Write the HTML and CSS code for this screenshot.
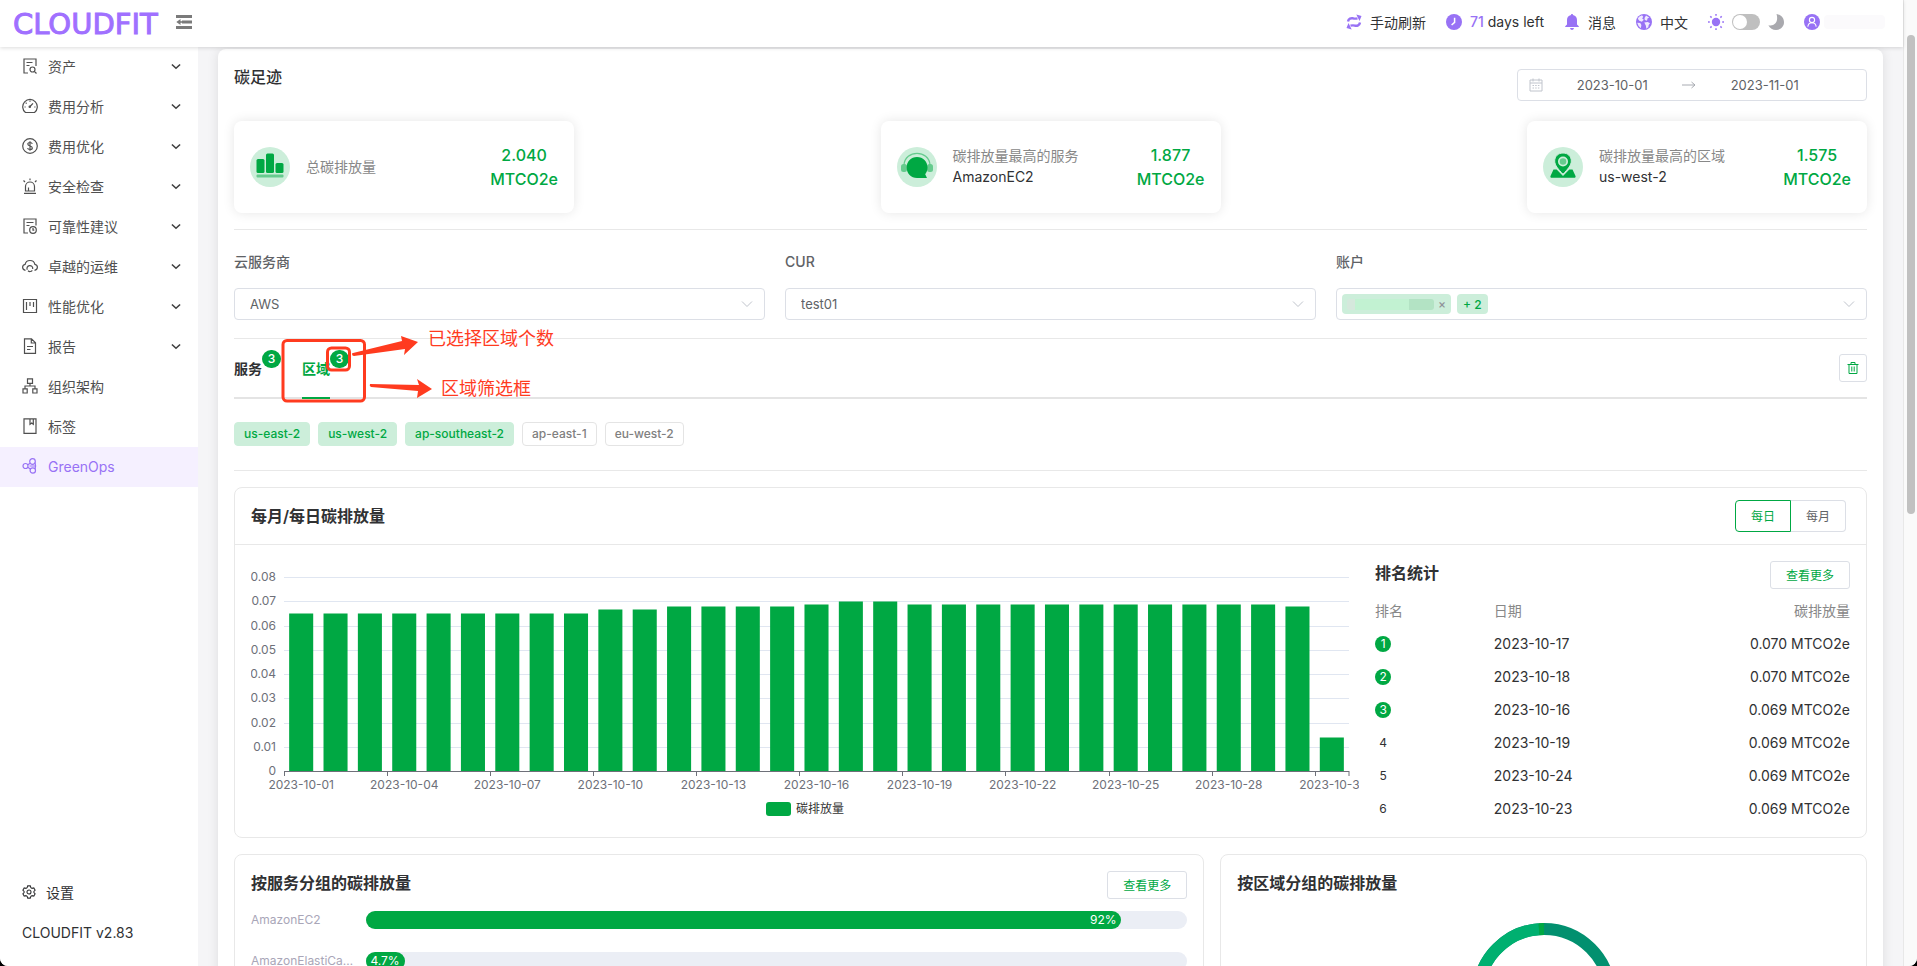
FILE: index.html
```html
<!DOCTYPE html>
<html lang="zh-CN">
<head>
  <meta charset="UTF-8">
  <title>CLOUDFIT - GreenOps</title>
  <link rel="stylesheet" href="styles.css">
</head>
<body>
  <div class="app">
    <div class="window">
      <header class="header">
        <a class="logo" href="#">CLOUDFIT</a>
        <button class="fold" type="button" aria-label="收起菜单">
          <svg width="16" height="14" viewBox="0 0 16 14" fill="#7a7a7a"><path d="M0 0h16v3H0zM6 5.500h10v3H6zM0 11h16v3H0zM4.500 4v6L.3 7z"/><path d="M3 6.200h3v1.600H3z"/></svg>
        </button>
        <nav class="tools">
          <a class="tool" href="#">
            <svg width="16" height="16" viewBox="0 0 16 16" fill="none" stroke="#9872f5" stroke-width="2.400"><path d="M2 7.500C2.500 4.500 5 3.900 7 4.300c1.500.5 2.500.5 4.500 0M14 8.500c-.5 3-3 3.600-5 3.200-1.500-.5-2.500-.5-4.500 0"/><path d="M10.300.5L15.500 2l-2 5zM5.700 15.500L.5 14l2-5z" fill="#9872f5" stroke="none"/></svg>
            手动刷新
          </a>
          <a class="tool" href="#">
            <svg width="16" height="16" viewBox="0 0 16 16"><circle cx="8" cy="8" r="8" fill="#9872f5"/><path d="M8.600 3.800v4.600L5.600 11" fill="none" stroke="#fff" stroke-width="1.500"/></svg>
            <span><b class="days">71</b> days left</span>
          </a>
          <a class="tool" href="#">
            <svg width="16" height="16" viewBox="0 0 16 16" fill="#9872f5"><path d="M8 0c.7 0 1 .4 1 1 2.700.5 4 2.400 4 5v4.500l1.800 1.700v.8H1.200v-.8L3 10.500V6c0-2.600 1.300-4.500 4-5 0-.6.3-1 1-1zM6 14h4c-.3 1.300-1 2-2 2s-1.700-.7-2-2z"/></svg>
            消息
          </a>
          <a class="tool" href="#">
            <svg width="16" height="16" viewBox="0 0 16 16"><circle cx="8" cy="8" r="8" fill="#9872f5"/><path d="M3 2.800l3-1.600 1.200 1.500-1 1.800 1.600 1.300-2 1.900-2.500-1-1.500-2zM10 1.400l3.200 2-1.700 1-.5 2.300-2.200-.6-.3-2.200zM1.200 8.800l3 .3 1.200 2-.6 3.200-2.200-2.200zM8.300 8.600l3.400-.6 2.300 1.300-1.300 1.600-.4 2.400-2 1.500-.4-3z" fill="#fff" opacity=".85"/></svg>
            中文
          </a>
          <label class="theme">
            <svg width="16" height="16" viewBox="0 0 16 16"><circle cx="8" cy="8" r="4.200" fill="#9872f5"/><path d="M8 0v1.800M8 14.200V16M0 8h1.800M14.200 8H16M2.300 2.300l1.300 1.300M12.400 12.400l1.300 1.300M2.300 13.700l1.300-1.300M12.400 3.600l1.300-1.300" stroke="#9872f5" stroke-width="1.500"/></svg>
            <input class="switch" type="checkbox" aria-label="深色模式">
            <svg width="16" height="16" viewBox="0 0 16 16"><path d="M8.500 0C13 .8 16 4 16 8.300 16 12.800 12.500 16 8 16c-3.300 0-6.200-1.800-7.600-4.800 5.500 1.600 10.600-3 8.100-11.200z" fill="#a9a9ae"/></svg>
          </label>
          <a class="user" href="#" aria-label="用户">
            <svg width="16" height="16" viewBox="0 0 16 16"><circle cx="8" cy="8" r="8" fill="#9872f5"/><g fill="none" stroke="#fff" stroke-width="1.100"><circle cx="8" cy="6" r="2.600"/><path d="M3.800 12.600C4.200 10 6 8.700 8 8.700s3.800 1.300 4.200 3.900"/></g></svg>
            <span class="user-name"></span>
          </a>
        </nav>
      </header>

      <div class="layout">
        <aside class="sidebar">
          <ul class="menu">
            <li><a class="menu-item" href="#">
              <svg class="icon" viewBox="0 0 16 16"><path d="M6 15H2V1h12v7M4.500 4.500h6M4.500 7.500h3"/><circle cx="10.500" cy="11.500" r="2.500"/><path d="M12.300 13.300L14.500 15.500"/></svg>
              资产<svg class="chevron" viewBox="0 0 8 6"><path d="M.5 1.300L4 4.500l3.500-3.200"/></svg></a></li>
            <li><a class="menu-item" href="#">
              <svg class="icon" viewBox="0 0 16 16"><path d="M3.500 14.500A7.300 7.300 0 1 1 12.500 14.500zM8 8.500l3-3.200M8 2.500v1.200M3.700 4.700l.9.900M2.500 9h1.200M12.300 9h1.200"/><circle cx="7.800" cy="8.700" r=".7"/></svg>
              费用分析<svg class="chevron" viewBox="0 0 8 6"><path d="M.5 1.300L4 4.500l3.500-3.200"/></svg></a></li>
            <li><a class="menu-item" href="#">
              <svg class="icon" viewBox="0 0 16 16"><circle cx="8" cy="8" r="7.300"/><path d="M10.300 5.800C10 4.800 9.200 4.500 8 4.500c-1.300 0-2.200.6-2.200 1.600 0 2.500 4.500 1.300 4.500 3.800 0 1-1 1.600-2.300 1.600s-2.200-.5-2.400-1.500M8 3.200v9.600"/></svg>
              费用优化<svg class="chevron" viewBox="0 0 8 6"><path d="M.5 1.300L4 4.500l3.500-3.200"/></svg></a></li>
            <li><a class="menu-item" href="#">
              <svg class="icon" viewBox="0 0 16 16"><path d="M3.500 13V8.500a4.500 4.500 0 0 1 9 0V13zM2 15.300h12M6.500 12.500V9.500M8 .5v1.800M1.500 2.500L3 4M14.500 2.500L13 4"/></svg>
              安全检查<svg class="chevron" viewBox="0 0 8 6"><path d="M.5 1.300L4 4.500l3.500-3.200"/></svg></a></li>
            <li><a class="menu-item" href="#">
              <svg class="icon" viewBox="0 0 16 16"><path d="M6 15H2V1h12v6.500M4.500 4.500h7M4.500 7.500h3"/><circle cx="11" cy="12" r="3.300"/><path d="M11 10v2.200h1.300"/></svg>
              可靠性建议<svg class="chevron" viewBox="0 0 8 6"><path d="M.5 1.300L4 4.500l3.500-3.200"/></svg></a></li>
            <li><a class="menu-item" href="#">
              <svg class="icon" viewBox="0 0 16 16"><path d="M3.500 12.300C1.700 12 .6 10.800.6 9.300c0-1.600 1-2.600 2.500-2.900C3.600 4 5.500 2.500 8 2.500S12.400 4 12.900 6.400c1.500.3 2.500 1.300 2.500 2.900 0 1.500-1.100 2.700-2.900 3"/><path d="M5.300 11.800a2.900 2.900 0 1 1 5.400-.8M10.300 12.300A2.900 2.900 0 0 1 6 12.800"/></svg>
              卓越的运维<svg class="chevron" viewBox="0 0 8 6"><path d="M.5 1.300L4 4.500l3.500-3.200"/></svg></a></li>
            <li><a class="menu-item" href="#">
              <svg class="icon" viewBox="0 0 16 16"><path d="M1.500 1.500h13v13h-13zM4.500 4v8M8 4v4M11.500 4v5"/></svg>
              性能优化<svg class="chevron" viewBox="0 0 8 6"><path d="M.5 1.300L4 4.500l3.500-3.200"/></svg></a></li>
            <li><a class="menu-item" href="#">
              <svg class="icon" viewBox="0 0 16 16"><path d="M2.500.8h7l4 4v10.500h-11zM9.300 1v4h4M5 8.500h6M5 11.500h3.500"/></svg>
              报告<svg class="chevron" viewBox="0 0 8 6"><path d="M.5 1.300L4 4.500l3.500-3.200"/></svg></a></li>
            <li><a class="menu-item" href="#">
              <svg class="icon" viewBox="0 0 16 16"><path d="M5.500.8h5v4.500h-5zM1 10.800h4.200v4.200H1zM10.800 10.800H15v4.200h-4.200zM8 5.300V8M3 10.800V8h10v2.800"/></svg>
              组织架构</a></li>
            <li><a class="menu-item" href="#">
              <svg class="icon" viewBox="0 0 16 16"><path d="M2 .8h12v14.500H2zM8 .8v5.500l1.700-1.300 1.600 1.300V.8"/></svg>
              标签</a></li>
            <li><a class="menu-item active" href="#">
              <svg class="icon" viewBox="0 0 16 16"><circle cx="3.500" cy="8" r="2.500"/><circle cx="10.500" cy="3.500" r="2.800"/><circle cx="10.800" cy="12.500" r="2.700"/><path d="M5.700 6.800L8.300 5.200M5.700 9.200l2.700 1.900M7.500 8h5.500M13 4.500c.7 2 .7 4.500 0 6.500"/></svg>
              GreenOps</a></li>
          </ul>
          <div class="sidebar-foot">
            <a class="settings" href="#">
              <svg class="gear" viewBox="0 0 16 16"><path d="M6.500 1h3l.6 2 1.400.8 2-.5 1.500 2.600L13.600 7.300v1.400l1.400 1.400-1.500 2.600-2-.5-1.400.8-.6 2h-3l-.6-2-1.400-.8-2 .5L1 10.100l1.400-1.400V7.300L1 5.900l1.500-2.600 2 .5L5.900 3z"/><circle cx="8" cy="8" r="2.300"/></svg>
              设置
            </a>
            <p class="version">CLOUDFIT v2.83</p>
          </div>
        </aside>

        <main class="main">
          <div class="page">
            <div class="page-head">
              <h1>碳足迹</h1>
              <div class="date-range">
                <svg width="14" height="14" viewBox="0 0 14 14" fill="none" stroke="#c0c4cc"><path d="M1 2h12v11H1zM1 5h12M4 .5v3M10 .5v3"/><path d="M3.500 7.500h7M3.500 10h7" stroke-dasharray="1.500 1.200"/></svg>
                <input type="text" aria-label="开始日期" value="2023-10-01">
                <svg width="14" height="8" viewBox="0 0 14 8" fill="none" stroke="#a8abb2"><path d="M0 4h13M9.500 1L13 4 9.500 7"/></svg>
                <input type="text" aria-label="结束日期" value="2023-11-01">
              </div>
            </div>

            <div class="stats">
              <div class="stat">
                <svg width="40" height="40" viewBox="0 0 40 40"><circle cx="20" cy="20" r="20" fill="#cceeda"/><g fill="#00a843"><rect x="6.500" y="12" width="8" height="14" rx="1.500"/><rect x="16" y="6.500" width="8" height="19.500" rx="1.500"/><rect x="25.500" y="16" width="8" height="10" rx="1.500"/></g><rect x="6.500" y="27.500" width="27" height="3" rx="1" fill="#66cb8e"/></svg>
                <div class="stat-label"><span>总碳排放量</span></div>
                <div class="stat-value">2.040<br>MTCO2e</div>
              </div>
              <div class="stat">
                <svg width="40" height="40" viewBox="0 0 40 40"><circle cx="20" cy="20" r="20" fill="#cceeda"/><path d="M7 18C8 2.500 32 2.500 33 18" fill="none" stroke="#66cb8e" stroke-width="1.300"/><rect x="4" y="17" width="6" height="8" rx="2.500" fill="#66cb8e"/><rect x="30" y="17" width="6" height="8" rx="2.500" fill="#66cb8e"/><path d="M20 10c6 0 10.500 4.500 10.500 10.500 0 2.700-.9 5-2.300 6.800L30 31H20C14 31 9.700 26.500 9.700 20.500S14 10 20 10z" fill="#00a843"/></svg>
                <div class="stat-label"><span>碳排放量最高的服务</span>AmazonEC2</div>
                <div class="stat-value">1.877<br>MTCO2e</div>
              </div>
              <div class="stat">
                <svg width="40" height="40" viewBox="0 0 40 40"><circle cx="20" cy="20" r="20" fill="#cceeda"/><path d="M10.500 22.500h3.200L20 29l6.300-6.500h3.200L32.500 29c.4 1-.1 1.800-1.200 1.800H8.700c-1.100 0-1.600-.8-1.200-1.800z" fill="#00a843"/><path d="M20 6c-5 0-8.300 3.500-8.300 8 0 4.300 3.600 8.300 8.300 13.200 4.700-4.900 8.300-8.900 8.300-13.200 0-4.500-3.300-8-8.300-8z" fill="#00a843" stroke="#cceeda" stroke-width="1"/><circle cx="20" cy="14.500" r="5" fill="#cceeda"/><circle cx="20" cy="14.500" r="3.300" fill="#66cb8e"/></svg>
                <div class="stat-label"><span>碳排放量最高的区域</span>us-west-2</div>
                <div class="stat-value">1.575<br>MTCO2e</div>
              </div>
            </div>

            <form class="filters">
              <div class="field">
                <label for="provider">云服务商</label>
                <div class="control">
                  <select id="provider"><option>AWS</option></select>
                  <svg class="arrow" viewBox="0 0 12 8"><path d="M1 1.500l5 5 5-5"/></svg>
                </div>
              </div>
              <div class="field">
                <label for="cur">CUR</label>
                <div class="control">
                  <select id="cur"><option>test01</option></select>
                  <svg class="arrow" viewBox="0 0 12 8"><path d="M1 1.500l5 5 5-5"/></svg>
                </div>
              </div>
              <div class="field">
                <label for="account">账户</label>
                <div class="control multi">
                  <span class="chip"><span class="masked"></span><button type="button" aria-label="移除">×</button></span>
                  <span class="chip more">+ 2</span>
                  <input id="account" type="text">
                  <svg class="arrow" viewBox="0 0 12 8"><path d="M1 1.500l5 5 5-5"/></svg>
                </div>
              </div>
            </form>

            <div class="tabbar">
              <div class="tabs" role="tablist">
                <button class="tab" type="button" role="tab">服务<span class="badge">3</span></button>
                <button class="tab current" type="button" role="tab" aria-selected="true">区域<span class="badge">3</span></button>
              </div>
              <button class="clear" type="button" aria-label="清空">
                <svg width="12" height="12" viewBox="0 0 12 12" fill="none" stroke="#00a843"><path d="M.5 2.500h11M4 2.500v-2h4v2M2 2.500v9h8v-9M4.800 4.500v5M7.200 4.500v5"/></svg>
              </button>
              <!-- callouts over the region tab -->
              <svg class="callout" width="340" height="68" viewBox="0 0 340 68">
                <g fill="none" stroke="#ff3b1f" stroke-width="3"><rect x="49" y="1.500" width="81.500" height="60.500" rx="4"/><rect x="93.500" y="9" width="22" height="22" rx="4"/></g>
                <g fill="#ff3b1f"><path d="M118 15q0-1 1-1l49-12-1-5 17 6-14 13 1-6-51 7q-2 0-2-2zM136 45l49 1-2-6 15 10-15 9 1-7-47-4q-2-1-1-3z"/>
                <text x="194" y="6">已选择区域个数</text><text x="207" y="56">区域筛选框</text></g>
              </svg>
            </div>

            <div class="regions">
              <button class="region on" type="button">us-east-2</button>
              <button class="region on" type="button">us-west-2</button>
              <button class="region on" type="button">ap-southeast-2</button>
              <button class="region" type="button">ap-east-1</button>
              <button class="region" type="button">eu-west-2</button>
            </div>

            <section class="panel">
              <div class="panel-head">
                <h2>每月/每日碳排放量</h2>
                <div class="group">
                  <button class="selected" type="button">每日</button><button type="button">每月</button>
                </div>
              </div>
              <div class="panel-body">
                <div class="chart">
                  <svg id="emissions" height="226" role="img" aria-label="碳排放量"></svg>
                  <div class="legend"><i></i>碳排放量</div>
                </div>
                <div class="rank">
                  <div class="rank-head"><h2>排名统计</h2><button class="btn" type="button">查看更多</button></div>
                  <table>
                    <thead><tr><th>排名</th><th>日期</th><th>碳排放量</th></tr></thead>
                    <tbody>
                      <tr><td><span class="no top">1</span></td><td>2023-10-17</td><td>0.070 MTCO2e</td></tr>
                      <tr><td><span class="no top">2</span></td><td>2023-10-18</td><td>0.070 MTCO2e</td></tr>
                      <tr><td><span class="no top">3</span></td><td>2023-10-16</td><td>0.069 MTCO2e</td></tr>
                      <tr><td><span class="no">4</span></td><td>2023-10-19</td><td>0.069 MTCO2e</td></tr>
                      <tr><td><span class="no">5</span></td><td>2023-10-24</td><td>0.069 MTCO2e</td></tr>
                      <tr><td><span class="no">6</span></td><td>2023-10-23</td><td>0.069 MTCO2e</td></tr>
                    </tbody>
                  </table>
                </div>
              </div>
            </section>

            <div class="groups">
              <section class="panel services">
                <div class="rank-head"><h2>按服务分组的碳排放量</h2><button class="btn" type="button">查看更多</button></div>
                <div class="row">
                  <span class="row-name">AmazonEC2</span>
                  <div class="bar"><div class="fill" style="width: 92%">92%</div></div>
                </div>
                <div class="row">
                  <span class="row-name">AmazonElastiCache</span>
                  <div class="bar"><div class="fill" style="width: 4.7%">4.7%</div></div>
                </div>
              </section>
              <section class="panel by-region">
                <h2>按区域分组的碳排放量</h2>
                <svg class="donut" width="144" height="144" viewBox="0 0 144 144" fill="none" stroke-width="12">
                  <circle cx="72" cy="72" r="66" stroke="#02906f"/>
                  <path d="M72 138A66 66 0 0 1 67 6.200" stroke="#00b070"/>
                  <path d="M67 6.200A66 66 0 0 1 72 6" stroke="#00a843"/>
                </svg>
              </section>
            </div>
          </div>
        </main>
      </div>
    </div>
    <div class="scroll-track"><div class="scroll-thumb"></div></div>
  </div>
  <script src="script.js"></script>
</body>
</html>
```
FILE: styles.css
```css
* {
    box-sizing: border-box;
}

html {
    background: #000;
}

body {
    margin: 0;
    font-family: Inter, "Noto Sans CJK SC", sans-serif;
    font-size: 14px;
    color: #303133;
}

h1, h2, p, ul {
    margin: 0;
    padding: 0;
}

h1, h2 {
    font-size: 16px;
    line-height: 16px;
    font-weight: 500;
}

h2 {
    font-weight: 600;
}

a {
    color: inherit;
    text-decoration: none;
}

button, input, select {
    font: inherit;
    color: inherit;
}

button {
    padding: 0;
    background: none;
    border: none;
    cursor: pointer;
}

.app {
    display: flex;
    height: 100vh;
    overflow: hidden;
    background: #f5f5f7;
    border-radius: 0 0 8px 8px;
}

.window {
    flex: 1;
    min-width: 0;
    display: flex;
    flex-direction: column;
}

/* Header */
.header {
    position: relative;
    z-index: 2;
    flex: none;
    display: flex;
    align-items: center;
    height: 47px;
    padding: 0 18px 4px 13px;
    background: #fff;
    box-shadow: 0 1px 4px rgba(0, 0, 0, 0.14);
}

.logo {
    margin: 4px 18px 0 0;
    font-family: "DejaVu Sans", sans-serif;
    font-size: 29px;
    line-height: 32px;
    color: #a070ff;
    -webkit-text-stroke: 1px #a070ff;
}

.fold {
    display: flex;
}

.tools {
    display: flex;
    align-items: center;
    gap: 20px;
    margin-left: auto;
}

.tool, .theme {
    display: flex;
    align-items: center;
    gap: 8px;
}

.days {
    font-weight: 500;
    color: #9872f5;
}

.switch {
    appearance: none;
    width: 28px;
    height: 16px;
    margin: 0;
    padding: 1px;
    background: #bfbfbf;
    border-radius: 8px;
}

.switch::before {
    content: "";
    display: block;
    width: 14px;
    height: 14px;
    background: #fff;
    border-radius: 50%;
}

.user {
    display: flex;
    align-items: center;
    gap: 4px;
}

.user-name {
    width: 61px;
    height: 14px;
    background: #fbfafc;
    border-radius: 4px;
}

/* Sidebar */
.layout {
    flex: 1;
    display: flex;
    min-height: 0;
}

.sidebar {
    flex: none;
    display: flex;
    flex-direction: column;
    width: 198px;
    background: #fff;
    color: #505050;
}

.menu {
    list-style: none;
}

.menu-item {
    display: flex;
    align-items: center;
    gap: 10px;
    height: 40px;
    padding: 0 17px 2px 22px;
}

.menu-item.active {
    background: #f5f0ff;
    color: #9872f5;
}

.icon, .gear {
    width: 16px;
    height: 16px;
    fill: none;
    stroke: currentColor;
    stroke-width: 1.2;
}

.gear {
    width: 14px;
    height: 14px;
}

.chevron {
    width: 10px;
    height: 7px;
    margin-left: auto;
    fill: none;
    stroke: #404040;
    stroke-width: 1.4;
}

.sidebar-foot {
    margin-top: auto;
    padding: 0 22px 13px;
    color: #303133;
}

.settings {
    display: flex;
    align-items: center;
    gap: 10px;
    height: 40px;
    padding-bottom: 2px;
}

.version {
    line-height: 40px;
}

/* Page */
.main {
    flex: 1;
    min-width: 0;
    padding: 2px 20px 0;
    overflow: hidden;
}

.page {
    padding: 20px 16px;
    background: #fff;
    border-radius: 8px;
    box-shadow: 0 0 12px rgba(0, 0, 0, 0.1);
}

.page-head {
    display: flex;
    justify-content: space-between;
    align-items: flex-start;
    margin-bottom: 20px;
}

.date-range {
    display: flex;
    align-items: center;
    gap: 8px;
    width: 350px;
    height: 32px;
    padding: 0 40px 0 11px;
    border: 1px solid #dcdfe6;
    border-radius: 4px;
    font-size: 13px;
    color: #606266;
}

.date-range svg {
    flex: none;
}

.date-range input {
    flex: 1;
    min-width: 0;
    border: none;
    outline: none;
    background: none;
    text-align: center;
}

.stats {
    display: flex;
    justify-content: space-between;
    padding-bottom: 16px;
    border-bottom: 1px solid #e8e8e8;
}

.stat {
    display: flex;
    align-items: center;
    gap: 16px;
    width: 340px;
    height: 92px;
    padding: 0 16px;
    border-radius: 8px;
    box-shadow: 0 0 12px rgba(0, 0, 0, 0.1);
}

.stat-label {
    padding-bottom: 2px;
    line-height: 21px;
}

.stat-label span {
    display: block;
    color: #888;
}

.stat-value {
    margin-left: auto;
    font-size: 16px;
    line-height: 24px;
    font-weight: 500;
    text-align: center;
    color: #00a843;
}

/* Filters */
.filters {
    display: grid;
    grid-template-columns: repeat(3, 1fr);
    gap: 20px;
    padding: 22px 0 18px;
    border-bottom: 1px solid #e8e8e8;
}

.field label {
    display: block;
    margin-bottom: 16px;
    line-height: 20px;
    font-weight: 500;
    color: #606266;
}

.control {
    position: relative;
    height: 32px;
    border: 1px solid #dcdfe6;
    border-radius: 4px;
    font-size: 13px;
    color: #606266;
}

.control select {
    appearance: none;
    width: 100%;
    height: 100%;
    padding: 0 15px;
    border: none;
    background: none;
}

.arrow {
    position: absolute;
    right: 11px;
    top: 11px;
    width: 12px;
    height: 8px;
    fill: none;
    stroke: #c0c4cc;
}

.multi {
    display: flex;
    align-items: center;
    gap: 6px;
    padding: 0 30px 0 5px;
}

.multi input {
    flex: 1;
    min-width: 0;
    border: none;
    background: none;
}

.chip {
    display: flex;
    align-items: center;
    gap: 4px;
    height: 20px;
    padding: 0 5px;
    background: #cceeda;
    border-radius: 4px;
    font-size: 12px;
    font-weight: 500;
    color: #00a843;
}

.chip.more {
    padding: 0 6px;
}

.chip button {
    line-height: 16px;
    color: #909399;
}

.masked {
    width: 87px;
    height: 11px;
    background: linear-gradient(to right, #d5e8dc 8px, #c2f2d2 8px 62px, #b3e3c4 62px);
    border-radius: 3px;
}

/* Tabs */
.tabbar {
    position: relative;
    display: flex;
    justify-content: space-between;
    align-items: center;
    border-bottom: 2px solid #e4e4e4;
}

.tabs {
    display: flex;
    gap: 40px;
    height: 60px;
    margin-bottom: -2px;
}

.tab {
    position: relative;
    font-weight: 600;
    border-bottom: 2px solid transparent;
}

.tab.current {
    color: #00a843;
    border-color: #00a843;
}

.badge {
    position: absolute;
    left: 28px;
    top: 11px;
    width: 19px;
    height: 18px;
    border-radius: 9px;
    background: #00a843;
    font-size: 12px;
    line-height: 18px;
    font-weight: 500;
    color: #fff;
}

.clear {
    display: flex;
    align-items: center;
    justify-content: center;
    width: 28px;
    height: 28px;
    border: 1px solid #dcdfe6;
    border-radius: 3px;
}

.callout {
    position: absolute;
    left: 0;
    top: 0;
    overflow: visible;
    font-size: 18px;
    pointer-events: none;
}

.regions {
    display: flex;
    gap: 8px;
    padding: 23px 0 24px;
    border-bottom: 1px solid #e8e8e8;
    margin-bottom: 16px;
}

.region {
    height: 24px;
    padding: 0 9px 1px;
    border: 1px solid #e4e4e4;
    border-radius: 4px;
    font-size: 12px;
    font-weight: 500;
    color: #808080;
}

.region.on {
    border-color: #cceeda;
    background: #cceeda;
    color: #00a843;
}

/* Panels */
.panel {
    border: 1px solid #e8e8e8;
    border-radius: 8px;
}

.panel-head {
    display: flex;
    justify-content: space-between;
    align-items: center;
    height: 57px;
    padding: 0 20px 0 16px;
    border-bottom: 1px solid #e8e8e8;
}

.group {
    display: flex;
    font-size: 12px;
    color: #606266;
}

.group button {
    width: 55px;
    height: 32px;
    padding-bottom: 2px;
    border: 1px solid #dcdfe6;
    border-left: none;
    border-radius: 0 4px 4px 0;
}

.group .selected {
    width: 56px;
    border: 1px solid #00a843;
    border-radius: 4px 0 0 4px;
    color: #00a843;
}

.panel-body {
    display: grid;
    grid-template-columns: 7fr 3fr;
    gap: 16px;
    padding: 16px 16px 12px;
}

.chart {
    min-width: 0;
}

.chart svg {
    display: block;
    width: 100%;
    margin-top: 8px;
    font-size: 12px;
    fill: #6e7079;
}

.legend {
    display: flex;
    align-items: center;
    justify-content: center;
    gap: 5px;
    margin-top: 5px;
    font-size: 12px;
    line-height: 18px;
    color: #333;
}

.legend i {
    width: 25px;
    height: 14px;
    background: #00a843;
    border-radius: 3px;
}

.rank-head {
    display: flex;
    justify-content: space-between;
}

.rank-head h2 {
    line-height: 24px;
}

.btn {
    width: 80px;
    height: 28px;
    padding-bottom: 2px;
    border: 1px solid #dcdfe6;
    border-radius: 3px;
    font-size: 12px;
    color: #00a843;
}

.rank table {
    width: 100%;
    margin-top: 5px;
    table-layout: fixed;
    border-collapse: collapse;
}

.rank th, .rank td {
    width: 25%;
    height: 33px;
    padding: 0;
    text-align: left;
}

.rank th {
    padding-bottom: 2px;
    font-weight: 400;
    color: #888;
}

.rank th:last-child, .rank td:last-child {
    width: 50%;
    text-align: right;
}

.no {
    display: block;
    width: 16px;
    height: 16px;
    border-radius: 50%;
    font-size: 12px;
    line-height: 16px;
    text-align: center;
}

.no.top {
    background: #00a843;
    color: #fff;
}

.groups {
    display: grid;
    grid-template-columns: 3fr 2fr;
    gap: 16px;
    margin-top: 16px;
}

.services, .by-region {
    min-width: 0;
    padding: 16px;
}

.by-region h2 {
    line-height: 24px;
}

.row {
    display: flex;
    align-items: center;
    height: 41px;
}

.row-name {
    flex: none;
    width: 103px;
    margin-right: 12px;
    overflow: hidden;
    text-overflow: ellipsis;
    font-size: 12px;
    color: #a9a6b8;
}

.bar {
    flex: 1;
    height: 18px;
    border-radius: 9px;
    background: #ebeef5;
}

.fill {
    height: 18px;
    padding-right: 5px;
    border-radius: 9px;
    background: #00a843;
    font-size: 12px;
    line-height: 18px;
    text-align: right;
    color: #fff;
}

.donut {
    display: block;
    margin: 28px auto 40px;
}

/* Window scrollbar */
.scroll-track {
    flex: none;
    width: 14px;
    padding: 35px 2px 0 3px;
    background: #fafafa;
    border-left: 1px solid #e8e8e8;
}

.scroll-thumb {
    height: 479px;
    border-radius: 4px;
    background: #c1c1c1;
}
```
FILE: script.js
```javascript
// Daily carbon emissions, one value for each day of October
const values = [
  0.065, 0.065, 0.065, 0.065, 0.065, 0.065, 0.065, 0.065, 0.065, 0.067,
  0.067, 0.068, 0.068, 0.068, 0.068, 0.069, 0.07, 0.07, 0.069, 0.069,
  0.069, 0.069, 0.069, 0.069, 0.069, 0.069, 0.069, 0.069, 0.069, 0.068, 0.014
];
const svg = document.getElementById('emissions');

function add(name, attrs, text) {
  const el = document.createElementNS('http://www.w3.org/2000/svg', name);
  for (const key in attrs) el.setAttribute(key, attrs[key]);
  if (text) el.textContent = text;
  svg.appendChild(el);
}

function draw() {
  svg.innerHTML = '';
  const left = 33;
  const right = svg.clientWidth - 10;
  const top = 8;
  const bottom = 202;
  const band = (right - left) / values.length;
  const y = v => Math.round(bottom - v / 0.08 * (bottom - top)) + 0.5;

  for (let i = 0; i <= 8; i++) {
    const v = i / 100;
    add('line', { x1: left, x2: right, y1: y(v), y2: y(v), stroke: '#e0e6f1' });
    add('text', { x: left - 8, y: y(v) + 3, 'text-anchor': 'end' }, i ? v.toFixed(2) : '0');
  }
  values.forEach((v, i) => {
    const x = left + i * band;
    add('rect', { x: x + band * 0.15, y: y(v), width: band * 0.7, height: bottom - y(v), fill: '#00a843' });
    if (i % 3 === 0) {
      const tick = Math.round(x) + 0.5;
      add('line', { x1: tick, x2: tick, y1: bottom, y2: bottom + 5, stroke: '#6e7079' });
      const day = String(i + 1).padStart(2, '0');
      add('text', { x: x + band / 2, y: bottom + 18, 'text-anchor': 'middle' }, '2023-10-' + day);
    }
  });
  add('line', { x1: left, x2: right, y1: bottom + 0.5, y2: bottom + 0.5, stroke: '#6e7079' });
  add('line', { x1: right, x2: right, y1: bottom, y2: bottom + 5, stroke: '#6e7079' });
}

draw();
window.addEventListener('resize', draw);
```
